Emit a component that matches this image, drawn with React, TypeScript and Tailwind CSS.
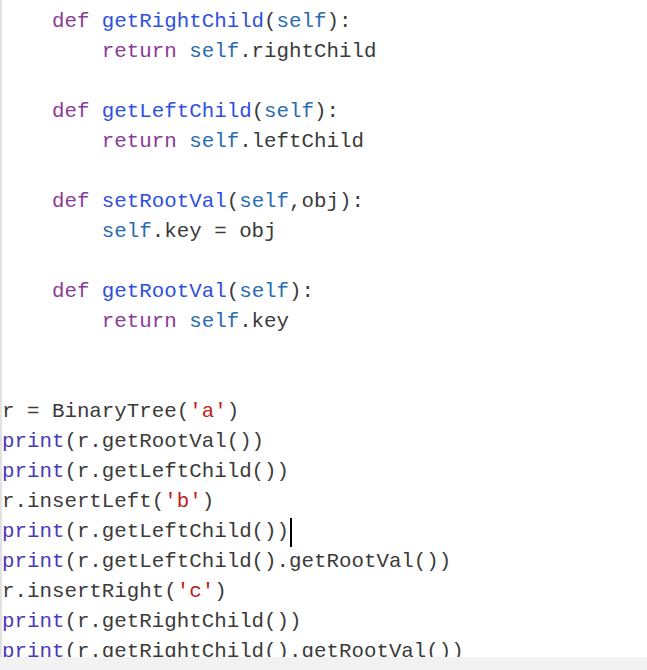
type Tok = [string, string];

const K = "text-[#8a3a98]";
const D = "text-[#2f4fe0]";
const V = "text-[#2a6cb0]";
const B = "text-[#4a3ab8]";
const S = "text-[#bb2222]";
const N = "text-[#3a3a3a]";

const lines: Tok[][] = [
  [[N, "    "], [K, "def"], [N, " "], [D, "getRightChild"], [N, "("], [V, "self"], [N, "):"]],
  [[N, "        "], [K, "return"], [N, " "], [V, "self"], [N, ".rightChild"]],
  [],
  [[N, "    "], [K, "def"], [N, " "], [D, "getLeftChild"], [N, "("], [V, "self"], [N, "):"]],
  [[N, "        "], [K, "return"], [N, " "], [V, "self"], [N, ".leftChild"]],
  [],
  [[N, "    "], [K, "def"], [N, " "], [D, "setRootVal"], [N, "("], [V, "self"], [N, ",obj):"]],
  [[N, "        "], [V, "self"], [N, ".key = obj"]],
  [],
  [[N, "    "], [K, "def"], [N, " "], [D, "getRootVal"], [N, "("], [V, "self"], [N, "):"]],
  [[N, "        "], [K, "return"], [N, " "], [V, "self"], [N, ".key"]],
  [],
  [],
  [[N, "r = BinaryTree("], [S, "'a'"], [N, ")"]],
  [[B, "print"], [N, "(r.getRootVal())"]],
  [[B, "print"], [N, "(r.getLeftChild())"]],
  [[N, "r.insertLeft("], [S, "'b'"], [N, ")"]],
  [[B, "print"], [N, "(r.getLeftChild())"]],
  [[B, "print"], [N, "(r.getLeftChild().getRootVal())"]],
  [[N, "r.insertRight("], [S, "'c'"], [N, ")"]],
  [[B, "print"], [N, "(r.getRightChild())"]],
  [[B, "print"], [N, "(r.getRightChild().getRootVal())"]],
];

export default function App() {
  return (
    <div className="w-[647px] h-[670px] bg-white flex flex-col overflow-hidden">
      <div className="h-[657px] border-l-2 border-[#e2e2e2] overflow-hidden pt-[7px]">
        {lines.map((toks, i) => (
          <div
            key={i}
            className="h-[30px] leading-[30px] whitespace-pre text-[20.8px] flex items-center"
            style={{ fontFamily: '"Liberation Mono", "Courier New", monospace' }}
          >
            {toks.map(([c, t], j) => (
              <span key={j} className={c}>
                {t}
              </span>
            ))}
            {i === 17 && <span className="w-[2px] h-[29px] bg-black ml-[1px]" />}
          </div>
        ))}
      </div>
      <div className="h-[13px] bg-[#f2f2f2]" />
    </div>
  );
}
